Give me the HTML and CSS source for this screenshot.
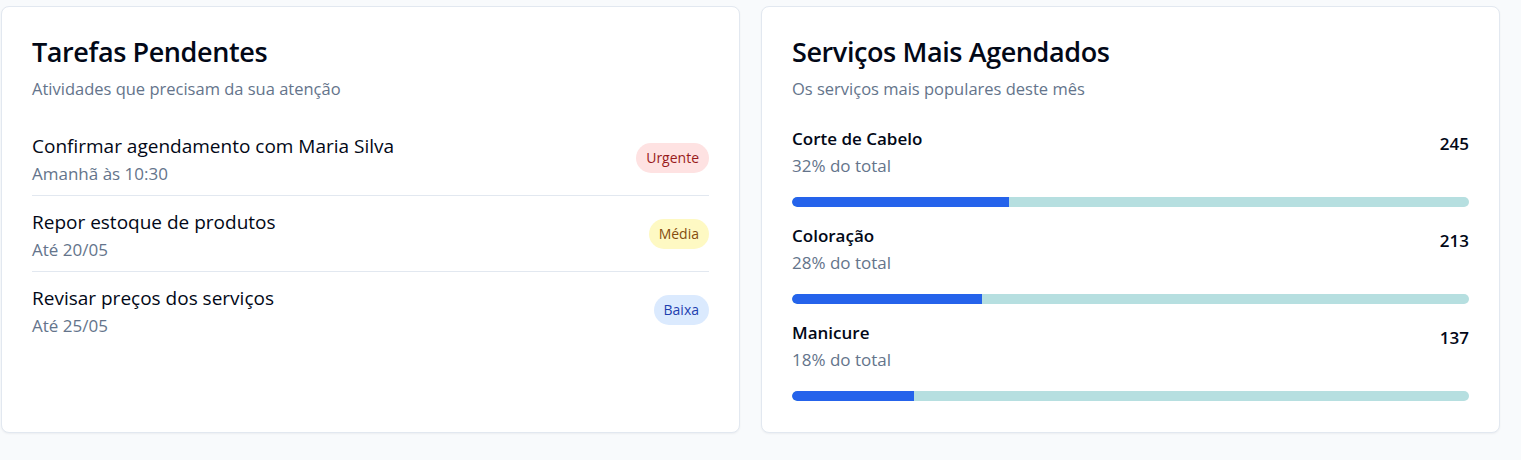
FILE: index.html
```html
<!DOCTYPE html>
<html lang="pt-BR">
<head>
<meta charset="utf-8">
<title>Dashboard</title>
<link rel="stylesheet" href="styles.css">
</head>
<body>
<main class="grid">
  <section class="card">
    <header class="card-header">
      <h2 class="card-title">Tarefas Pendentes</h2>
      <p class="card-desc">Atividades que precisam da sua atenção</p>
    </header>
    <ul class="tasks">
      <li class="task">
        <div class="task-info">
          <div class="task-title">Confirmar agendamento com Maria Silva</div>
          <div class="task-sub">Amanhã às 10:30</div>
        </div>
        <span class="badge badge-urgent">Urgente</span>
      </li>
      <li class="task">
        <div class="task-info">
          <div class="task-title">Repor estoque de produtos</div>
          <div class="task-sub">Até 20/05</div>
        </div>
        <span class="badge badge-medium">Média</span>
      </li>
      <li class="task">
        <div class="task-info">
          <div class="task-title">Revisar preços dos serviços</div>
          <div class="task-sub">Até 25/05</div>
        </div>
        <span class="badge badge-low">Baixa</span>
      </li>
    </ul>
  </section>
  <section class="card">
    <header class="card-header">
      <h2 class="card-title">Serviços Mais Agendados</h2>
      <p class="card-desc">Os serviços mais populares deste mês</p>
    </header>
    <ul class="services">
      <li class="service">
        <div class="service-head">
          <div>
            <div class="service-name">Corte de Cabelo</div>
            <div class="service-sub">32% do total</div>
          </div>
          <div class="service-count">245</div>
        </div>
        <div class="bar"><div class="bar-fill" style="width:32%"></div></div>
      </li>
      <li class="service">
        <div class="service-head">
          <div>
            <div class="service-name">Coloração</div>
            <div class="service-sub">28% do total</div>
          </div>
          <div class="service-count">213</div>
        </div>
        <div class="bar"><div class="bar-fill" style="width:28%"></div></div>
      </li>
      <li class="service">
        <div class="service-head">
          <div>
            <div class="service-name">Manicure</div>
            <div class="service-sub">18% do total</div>
          </div>
          <div class="service-count">137</div>
        </div>
        <div class="bar"><div class="bar-fill" style="width:18%"></div></div>
      </li>
    </ul>
  </section>
</main>
</body>
</html>
```
FILE: styles.css
```css
* { box-sizing: border-box; }
html, body { margin: 0; padding: 0; }
body {
  background: #f8fafc;
  font-family: "Open Sans", "Noto Sans", sans-serif;
  color: #020817;
  width: 1521px;
  height: 460px;
  overflow: hidden;
}
.grid {
  display: grid;
  grid-template-columns: 1fr 1fr;
  gap: 21px;
  padding: 6px 21px 0 1px;
  align-items: stretch;
}
.card {
  background: #fff;
  border: 1px solid #e2e8f0;
  border-radius: 8px;
  box-shadow: 0 1px 2px rgba(15, 23, 42, 0.05);
  padding: 29px 30px 30px 30px;
  height: 427px;
}
.card-header { margin: 0; }
.card-title {
  margin: 0;
  font-size: 27px;
  line-height: 32px;
  font-weight: 600;
  letter-spacing: -0.4px;
  color: #020817;
}
.card-desc {
  margin: 9px 0 0 0;
  font-size: 16.5px;
  line-height: 24px;
  color: #64748b;
}
.tasks {
  list-style: none;
  margin: 19px 0 0 0;
  padding: 0;
}
.task {
  display: flex;
  align-items: center;
  justify-content: space-between;
  padding: 13px 0 9px 0;
  border-bottom: 1px solid #e2e8f0;
}
.task:last-child { border-bottom: none; }
.task-title {
  font-size: 19px;
  line-height: 26px;
  color: #020817;
}
.task-sub {
  margin-top: 3px;
  font-size: 17px;
  line-height: 24px;
  color: #64748b;
}
.badge {
  display: inline-flex;
  align-items: center;
  height: 30px;
  padding: 0 10px;
  border-radius: 999px;
  font-size: 14px;
  margin-top: -4px;
}
.badge-urgent { background: #fee2e2; color: #991b1b; }
.badge-medium { background: #fef9c3; color: #854d0e; }
.badge-low { background: #dbeafe; color: #1e40af; }
.services {
  list-style: none;
  margin: 26px 0 0 0;
  padding: 0;
  display: flex;
  flex-direction: column;
  gap: 17px;
}
.service-head {
  display: flex;
  justify-content: space-between;
  align-items: flex-start;
}
.service-name {
  font-size: 17px;
  line-height: 24px;
  font-weight: 600;
  color: #020817;
}
.service-sub {
  margin-top: 3px;
  font-size: 17px;
  line-height: 24px;
  color: #64748b;
}
.service-count {
  font-size: 17px;
  line-height: 24px;
  font-weight: 600;
  margin-top: 5px;
  color: #020817;
}
.bar {
  margin-top: 19px;
  height: 10px;
  border-radius: 999px;
  background: #b6dfe0;
  overflow: hidden;
}
.bar-fill {
  height: 100%;
  background: #2563eb;
  border-radius: 999px 0 0 999px;
}
```
